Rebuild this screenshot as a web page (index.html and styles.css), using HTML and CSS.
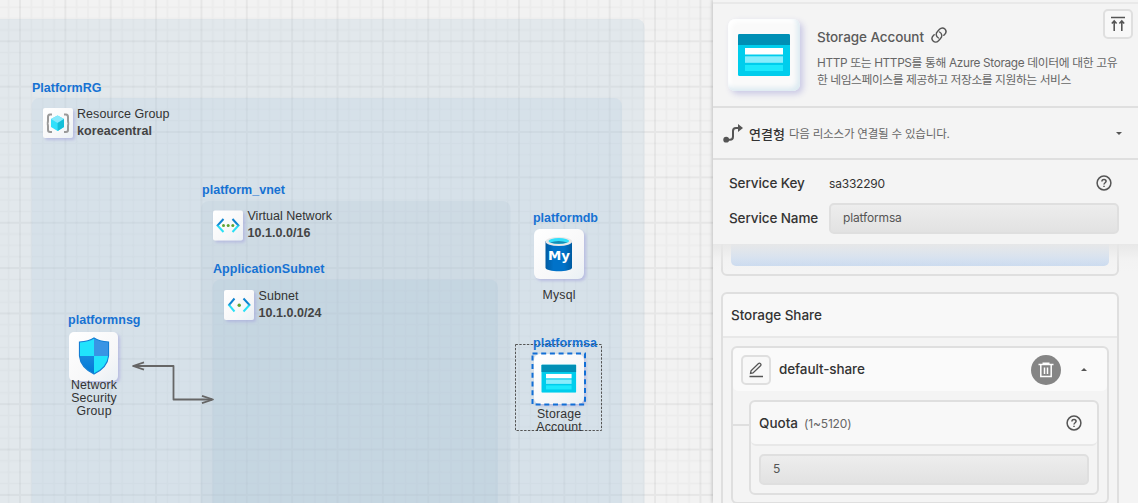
FILE: index.html
```html
<!DOCTYPE html>
<html lang="ko">
<head>
<meta charset="utf-8">
<title>Platform diagram</title>
<link rel="stylesheet" href="styles.css">
</head>
<body>
<div class="app">
<svg class="canvas" width="713" height="503" viewBox="0 0 713 503">
  <defs>
    <pattern id="grid" x="20" y="41.3" width="45.36" height="45.36" patternUnits="userSpaceOnUse">
      <path class="minor" d="M11.34 0V45.36M22.68 0V45.36M34.02 0V45.36M0 11.34H45.36M0 22.68H45.36M0 34.02H45.36"/>
      <path class="major" d="M0 0V45.36M45.36 0V45.36M0 0H45.36M0 45.36H45.36"/>
    </pattern>
    <linearGradient id="tile" x1="0" y1="0" x2="1" y2="1"><stop offset="0" stop-color="#fff"/><stop offset=".65" stop-color="#f7f7f8"/><stop offset="1" stop-color="#e9f0f5"/></linearGradient>
    <linearGradient id="chev" x1="0" y1="0" x2="0" y2="1"><stop offset=".4" stop-color="#0f83d0"/><stop offset=".6" stop-color="#2be0f5"/></linearGradient>
    <linearGradient id="db" x1="0" y1="0" x2="1" y2="0"><stop offset="0" stop-color="#005ba1"/><stop offset=".3" stop-color="#0072c9"/><stop offset=".7" stop-color="#0072c9"/><stop offset="1" stop-color="#005ba1"/></linearGradient>
    <linearGradient id="sh" x1="0" y1="0" x2="0" y2="1"><stop offset="0" stop-color="#2f9be8"/><stop offset="1" stop-color="#0078d4"/></linearGradient>
    <filter id="shadow" x="-30%" y="-30%" width="170%" height="170%"><feDropShadow dx="2" dy="2" stdDeviation="1.8" flood-color="#a6a5dc" flood-opacity=".6"/></filter>
    <symbol id="storage" viewBox="0 0 52 42">
      <rect width="52" height="42" rx="1.5" fill="#00cdec"/><path d="M0 11V1.500Q0 0 1.500 0H50.500Q52 0 52 1.500V11Z" fill="#008fb5"/>
      <rect x="7" y="14" width="38" height="6.500" fill="#fff"/><rect x="7" y="22.300" width="38" height="6.500" fill="#88edfc"/><rect x="7" y="31" width="38" height="6" fill="#1de9fc"/>
    </symbol>
  </defs>
  <rect width="713" height="503" fill="#f2f2f2"/>
  <rect width="713" height="503" fill="url(#grid)"/>
  <rect class="zone-root" x="-20" y="19" width="664.500" height="520" rx="8"/>
  <rect class="zone-group" x="31.500" y="98" width="590.500" height="440" rx="8"/>
  <rect class="zone-vnet" x="201" y="201" width="309.500" height="340" rx="8"/>
  <rect class="zone-subnet" x="212.500" y="279.500" width="285.500" height="260" rx="8"/>

  <text class="name" x="32" y="92" textLength="69.500">PlatformRG</text>
  <text class="name" x="202" y="194" textLength="83">platform_vnet</text>
  <text class="name" x="213" y="273" textLength="111.500">ApplicationSubnet</text>
  <text class="name" x="68" y="324" textLength="72.500">platformnsg</text>
  <text class="name" x="533" y="222" textLength="65">platformdb</text>

  <g filter="url(#shadow)" fill="url(#tile)">
    <rect x="43" y="108" width="30" height="30" rx="2"/>
    <rect x="213" y="210.500" width="30" height="30" rx="2"/>
    <rect x="224" y="290" width="30" height="30" rx="2"/>
    <rect x="69" y="332" width="49" height="49" rx="5"/>
    <rect x="534" y="229" width="50" height="50" rx="6"/>
  </g>

  <path d="M52 114.500H50Q48 114.500 48 117V120.500Q48 123.500 46.800 123.500Q48 123.500 48 126.500V130Q48 132 50 132H52M64 114.500H66Q68 114.500 68 117V120.500Q68 123.500 69.200 123.500Q68 123.500 68 126.500V130Q68 132 66 132H64" fill="none" stroke="#999" stroke-width="2"/>
  <path d="M57.600 115.500 64 119V127L57.600 131 51 127V119Z" fill="#32e0fb"/><path d="M51 119 57.600 115.500 64 119 57.600 123Z" fill="#86e8fb"/><path d="M57.600 123 64 119V127L57.600 131Z" fill="#14bfd9"/>
  <text class="label" x="77" y="118" textLength="92.500">Resource Group</text>
  <text class="value" x="77" y="135" textLength="75">koreacentral</text>

  <path d="M223.500 219 217.500 225.500 223.500 232M232.500 219 238.500 225.500 232.500 232" fill="none" stroke="url(#chev)" stroke-width="2"/>
  <g fill="#5ea432"><circle cx="223.500" cy="225.500" r="1.500"/><circle cx="228.200" cy="225.500" r="1.500"/><circle cx="232.800" cy="225.500" r="1.500"/></g>
  <text class="label" x="247.500" y="220" textLength="84.500">Virtual Network</text>
  <text class="value" x="247.500" y="237" textLength="63">10.1.0.0/16</text>

  <path d="M234.500 298.500 229 305 234.500 311.500M243.500 298.500 249.500 305 243.500 311.500" fill="none" stroke="url(#chev)" stroke-width="2"/>
  <circle cx="239.200" cy="305.300" r="1.700" fill="#5ea432"/>
  <text class="label" x="258.500" y="300" textLength="40">Subnet</text>
  <text class="value" x="258.500" y="317" textLength="63">10.1.0.0/24</text>

  <path d="M94 338Q99 341.500 108.500 342V356Q107.500 367.500 94 374Q80.500 367.500 79.500 356V342Q89 341.500 94 338Z" fill="url(#sh)" stroke="#137ed4" stroke-width="1.200"/>
  <path d="M94 338.800V356H80V342.500Q89 342 94 338.800ZM94 356H108Q107 367 94 373.300Z" fill="#21e3fc"/><path d="M94 338.800V356H108V342.500Q99 342 94 338.800Z" fill="#3994e4"/>
  <g class="caption"><text x="94" y="389" textLength="46">Network</text><text x="94" y="402" textLength="45.500">Security</text><text x="94" y="415" textLength="35">Group</text></g>

  <path d="M545.500 241V267.500C545.500 272.500 572 272.500 572 267.500V241Z" fill="url(#db)"/>
  <ellipse cx="558.800" cy="241.500" rx="13.300" ry="4.500" fill="#e8e8e8"/><ellipse cx="558.800" cy="241" rx="10.300" ry="3" fill="#32e0fb"/><path d="M550 242.500Q558.500 239.500 567.500 242.500Q558.500 245 550 242.500Z" fill="#198ab3"/>
  <text class="my" x="548" y="260" textLength="22" lengthAdjust="spacingAndGlyphs">My</text>
  <text class="caption" x="559" y="299" textLength="33">Mysql</text>

  <rect x="515.500" y="344.500" width="86" height="86" fill="none" stroke="#555" stroke-dasharray="2.400 1.400"/>
  <rect x="534" y="354" width="50" height="50" rx="6" fill="url(#tile)" filter="url(#shadow)"/>
  <rect x="532.500" y="353.500" width="52.500" height="51" fill="none" stroke="#126fd6" stroke-width="2" stroke-dasharray="5 3.700"/>
  <use href="#storage" x="541.300" y="364.500" width="35" height="28.300"/>
  <text class="name" x="533" y="347" textLength="64">platformsa</text>
  <g class="caption"><text x="559" y="418" textLength="44">Storage</text><text x="559" y="431" textLength="45.500">Account</text></g>

  <g fill="none" stroke="#666" stroke-width="1.800" stroke-linejoin="round"><path d="M134 366H173.500V399.500H212"/><path d="M144 362.300 133 366 144 369.700M202 395.800 213 399.500 202 403.200"/></g>
</svg>

<aside class="panel">
  <div class="fixed">
    <header class="resource">
      <div class="thumb"><svg width="52" height="42"><use href="#storage" width="52" height="42"/></svg></div>
      <div class="about">
        <h1>Storage Account <svg width="16" height="16" viewBox="0 0 16 16"><path d="M7.500 11C4.800 9.500 4.500 6.500 6.500 4.500L8.500 2.300C10.300.5 12.500.7 13.900 2.100S15.300 5.800 13.600 7.500L12.800 8.300M8.500 5C11.200 6.500 11.500 9.500 9.500 11.500L7.500 13.700C5.700 15.500 3.500 15.300 2.100 13.900S.7 10.200 2.400 8.500L3.200 7.700"/></svg></h1>
        <p><span class="line first">HTTP 또는 HTTPS를 통해 Azure Storage 데이터에 대한 고유</span><span class="line second">한 네임스페이스를 제공하고 저장소를 지원하는 서비스</span></p>
      </div>
      <button class="square up"><svg width="14" height="16" viewBox="0 0 14 16"><path d="M0 1.500H14M3.200 15V5M.8 7.500 3.200 5 5.600 7.500M10.800 15V5M8.400 7.500 10.800 5 13.200 7.500"/></svg></button>
    </header>
    <div class="connect">
      <svg width="21" height="19" viewBox="0 0 21 19"><circle cx="3.200" cy="15.700" r="2.900" fill="#555"/><path d="M3 15.800H7Q10 15.800 10 12.500V7Q10 4 13 4H16" fill="none" stroke="#555" stroke-width="2"/><path d="M15 0 20 4 15 8Z" fill="#555"/></svg>
      <b>연결형</b><span>다음 리소스가 연결될 수 있습니다.</span><i class="caret down"></i>
    </div>
    <div class="service">
      <div class="field"><label class="key">Service Key</label><span class="id">sa332290</span><svg class="help" width="16" height="16"><circle cx="8" cy="8" r="6.900"/><path d="M5.900 6.500C5.900 3.600 10.100 3.800 10.100 6.300C10.100 7.700 8 7.800 8 9.500M8 10.700V12"/></svg></div>
      <div class="field"><label class="sname">Service Name</label><div class="input">platformsa</div></div>
    </div>
  </div>
  <div class="body">
    <section class="card previous"><div class="add"></div></section>
    <section class="card share">
      <h2>Storage Share</h2>
      <div class="item">
        <div class="item-head">
          <button class="square"><svg width="16" height="16" viewBox="0 0 16 16"><path d="M1.500 14.500H15M2.500 11.500 3 8.800 10.500 1.500Q11.500.8 12.500 1.700T12.500 3.700L5 11Z" fill="none" stroke-width="1.300"/></svg></button>
          <span class="item-name">default-share</span>
          <button class="trash"><svg width="16" height="16" viewBox="0 0 16 16"><path d="M.5 2.500H15.500M4.500 1.200H11.500M2.800 3V14.500H13.200V3M6.500 5.500V12M9.500 5.500V12"/></svg></button>
          <i class="caret rise"></i>
        </div>
        <div class="quota">
          <div class="quota-head"><span class="q">Quota</span><small>(1~5120)</small><svg class="help" width="16" height="16"><circle cx="8" cy="8" r="6.900"/><path d="M5.900 6.500C5.900 3.600 10.100 3.800 10.100 6.300C10.100 7.700 8 7.800 8 9.500M8 10.700V12"/></svg></div>
          <div class="input">5</div>
        </div>
      </div>
    </section>
  </div>
</aside>
</div>
</body>
</html>
```
FILE: styles.css
```css
* { box-sizing: border-box; }
body { margin: 0; overflow: hidden; color: #333; font-family: Inter, "Noto Sans CJK KR", sans-serif; }
.app { display: flex; width: 1138px; height: 503px; overflow: hidden; }
.canvas { display: block; flex: none; font-family: "Liberation Sans", Arial, sans-serif; }
.minor { stroke: rgba(120,120,120,.05); stroke-width: 1.6; fill: none; }
.major { stroke: rgba(110,110,110,.085); stroke-width: 1.9; fill: none; }
.zone-root { fill: rgba(166,194,214,.2); }
.zone-group { fill: rgba(170,198,226,.2); }
.zone-vnet { fill: rgba(174,197,208,.2); }
.zone-subnet { fill: rgba(163,195,216,.2); }
.name { fill: #1672d3; font-size: 12.5px; font-weight: 700; }
.label { fill: #333; font-size: 12.5px; }
.value { fill: #444; font-size: 12.5px; font-weight: 700; }
.caption { fill: #333; font-size: 12.3px; text-anchor: middle; }
.my { fill: #fff; font: 900 13px "DejaVu Sans", sans-serif; }

.panel { width: 425px; flex: none; display: flex; flex-direction: column; background: #f4f4f4; box-shadow: 0 0 4px rgba(0,0,0,.25); position: relative; }
.fixed { position: relative; z-index: 1; height: 244px; flex: none; background: #f4f4f4; padding-top: 2px; }
.fixed::after { content: ""; position: absolute; top: 100%; left: 0; right: 0; height: 27px; background: linear-gradient(rgba(231,231,231,.95), rgba(238,238,238,.25) 60%, rgba(244,244,244,0)); }
.resource { height: 106px; display: flex; border-top: 2px solid #e9e9e9; border-bottom: 2px solid #dfdfdf; padding-left: 15px; }
.thumb { width: 72px; height: 72px; margin-top: 15px; display: grid; place-items: center; border-radius: 7px; background: #fafafa; box-shadow: 3px 3px 6px #c9c8e5, inset -3px -3px 5px #dceaf1, inset 3px 3px 5px #fff; }
.thumb svg { display: block; }
.about { width: 303px; margin: 24px 0 0 17px; }
h1 { display: flex; align-items: center; gap: 7px; margin: 0; height: 18px; font-size: 13.5px; font-weight: 500; letter-spacing: -.08px; color: #5a5a5a; white-space: nowrap; }
h1 svg { margin-top: -4px; fill: none; stroke: #555; stroke-width: 1.4; stroke-linecap: round; }
p { margin: 9px 0 0; color: #666; font-size: 12px; line-height: 17px; }
.line { display: block; white-space: nowrap; }
.first { font-size: 11.8px; letter-spacing: -.34px; }
.second { font-size: 11.8px; letter-spacing: -.44px; }
.square { width: 30px; height: 30px; padding: 0; display: grid; place-items: center; flex: none; border: 2px solid #dfdfdf; border-radius: 5px; background: #f8f8f8; }
.square svg { fill: none; stroke: #555; stroke-width: 1.6; }
.up { margin: 5px 0 0 -17px; }
.connect { height: 52px; border-bottom: 2px solid #dfdfdf; display: flex; align-items: center; padding: 0 16px 0 10px; color: #666; font-size: 12px; }
.connect b { margin: 0 4px 0 5px; color: #333; font-size: 13px; font-weight: 500; }
.connect span { font-size: 11.5px; letter-spacing: -.19px; }
.caret { width: 0; height: 0; border: 3px solid transparent; }
.down { margin-left: auto; border-top-color: #555; border-bottom: 0; }
.rise { margin: 0 20px 0 20px; border-bottom-color: #555; border-top: 0; }
.service { padding: 8px 19px 0 16px; }
.field { display: flex; align-items: center; height: 31px; }
.field + .field { margin-top: 4px; }
.field label { width: 100px; flex: none; padding-bottom: 2px; font-size: 13.5px; font-weight: 500; letter-spacing: -.1px; }
.id { font-size: 12px; letter-spacing: -.2px; }
.help { margin-left: auto; margin-right: 7px; margin-top: -1px; fill: none; stroke: #555; stroke-width: 1.5; }
.input { flex: 1; height: 31px; border: 2px solid #dfdfdf; border-radius: 5px; padding-left: 12px; line-height: 26px; font-size: 12px; letter-spacing: -.15px; color: #555; background: linear-gradient(#ededed,#e2e2e2); }
.body { flex: none; height: 259px; padding: 0 19px 0 8px; overflow: hidden; }
.card { border: 2px solid #dfdfdf; border-radius: 6px; }
.previous { height: 46px; margin-top: -14px; padding: 0 8px; }
.add { height: 34px; border-radius: 0 0 5px 5px; background: linear-gradient(#dbe8f8,#c8d9ef); }
.share { height: 230px; margin-top: 16px; }
h2 { height: 44px; margin: 0; padding-left: 8px; border-bottom: 2px solid #e8e8e8; background: #f8f8f8; font-size: 13.5px; font-weight: 500; letter-spacing: -.05px; line-height: 42px; border-radius: 5px 5px 0 0; }
.item { height: 158px; margin: 8px 8px 0; border: 2px solid #dfdfdf; border-radius: 6px; }
.item-head { height: 43px; background: #fafafa; border-radius: 5px; display: flex; align-items: center; padding-left: 8px; }
.item-name { margin-left: 8px; padding-bottom: 2px; font-size: 13.5px; font-weight: 500; letter-spacing: -.1px; }
.trash { margin-left: auto; width: 30px; height: 30px; padding: 0; border: 0; display: grid; place-items: center; border-radius: 50%; background: #858585; }
.trash svg { fill: none; stroke: #fff; stroke-width: 1.5; }
.quota { position: relative; height: 95px; margin: 9px 8px 0 16px; border: 2px solid #dfdfdf; border-radius: 6px; }
.quota::before { content: ""; position: absolute; width: 16px; height: 2px; left: -18px; top: 22px; background: #dfdfdf; }
.quota-head { height: 44px; padding: 0 8px; display: flex; align-items: center; background: #f8f8f8; border-bottom: 2px solid #e8e8e8; border-radius: 5px; font-size: 13.5px; font-weight: 500; }
.quota-head small { margin-left: 6px; color: #666; font-size: 12px; font-weight: 400; letter-spacing: -.15px; }
.quota .input { margin: 8px 8px 0; }
```
